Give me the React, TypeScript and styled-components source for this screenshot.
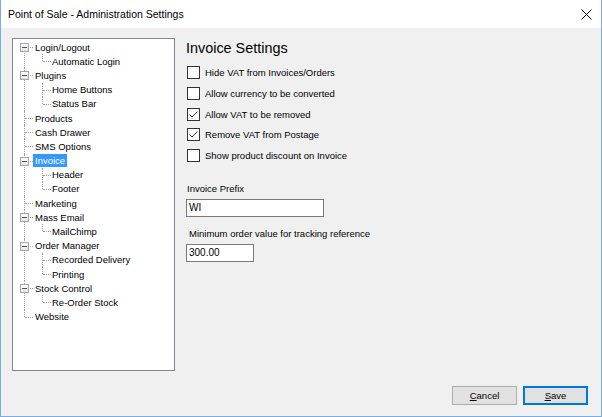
import React from 'react';
import styled, { createGlobalStyle } from 'styled-components';

const GlobalStyle = createGlobalStyle`
  html, body {
    margin: 0;
    padding: 0;
    background: #f0f0f0;
  }
  * {
    box-sizing: border-box;
  }
`;

const Window = styled.div`
  width: 602px;
  height: 417px;
  display: flex;
  flex-direction: column;
  background: #f0f0f0;
  border: 1px solid #75aee8;
  border-top: none;
  font-family: "Liberation Sans", Arial, sans-serif;
  font-size: 9.5px;
  color: #000;
  overflow: hidden;
`;

const TitleBar = styled.div`
  height: 28px;
  flex: none;
  display: flex;
  align-items: center;
  justify-content: space-between;
  background: #fff;
  padding: 0 9px 0 7px;
  font-size: 10.5px;
`;

const Body = styled.div`
  flex: 1;
  display: flex;
  flex-direction: column;
  padding: 10px 13px 0 11px;
`;

const Main = styled.div`
  display: flex;
  gap: 11px;
  height: 333px;
`;

const TreePanel = styled.div`
  width: 163px;
  height: 100%;
  flex: none;
  background: #fff;
  border: 1px solid #828790;
  padding-top: 1px;
`;

const TreeList = styled.ul`
  list-style: none;
  margin: 0;
  padding: 0;
`;

const dots = '1px dotted #a0a0a0';

const TreeItem = styled.li<{ $level: number; $first?: boolean; $last?: boolean }>`
  position: relative;

  &::before {
    content: '';
    position: absolute;
    left: ${p => (p.$level === 0 ? 11 : 29)}px;
    top: ${p => (p.$first && p.$level === 0 ? 7 : 0)}px;
    ${p => (p.$last ? 'height: 7px;' : 'bottom: 0;')}
    border-left: ${dots};
  }
`;

const Row = styled.div<{ $level: number }>`
  position: relative;
  height: 14.2px;
  display: flex;
  align-items: center;
  padding-left: ${p => (p.$level === 0 ? 20 : 37)}px;

  &::after {
    content: '';
    position: absolute;
    left: ${p => (p.$level === 0 ? 12 : 30)}px;
    width: 8px;
    top: 7px;
    border-top: ${dots};
  }
`;

const Expander = styled.span`
  position: absolute;
  left: 7px;
  top: 3px;
  width: 9px;
  height: 9px;
  background: linear-gradient(#ffffff, #e6e6e6);
  border: 1px solid #a5a5a5;
  z-index: 1;

  &::after {
    content: '';
    position: absolute;
    left: 1px;
    top: 3px;
    width: 5px;
    height: 1px;
    background: #505050;
  }
`;

const NodeLabel = styled.span<{ $selected?: boolean }>`
  position: relative;
  z-index: 1;
  padding: 0 2px;
  line-height: 13px;
  white-space: nowrap;
  background: ${p => (p.$selected ? '#3399ff' : 'transparent')};
  color: ${p => (p.$selected ? '#fff' : '#000')};
`;

const Settings = styled.div`
  flex: 1;
  display: flex;
  flex-direction: column;
  align-items: flex-start;
`;

const Heading = styled.h1`
  margin: 1px 0 0;
  font-size: 14.4px;
  font-weight: normal;
  line-height: 18px;
`;

const CheckList = styled.div`
  margin-top: 5.5px;
  display: flex;
  flex-direction: column;
`;

const CheckRow = styled.label`
  height: 20.7px;
  display: flex;
  align-items: center;
  gap: 5px;
  padding-left: 1px;
  white-space: nowrap;
`;

const Box = styled.span`
  width: 13px;
  height: 13px;
  flex: none;
  background: #fff;
  border: 1px solid #333;
  display: flex;
  align-items: center;
  justify-content: center;
`;

const FieldLabel = styled.div<{ $indent?: number; $top: number }>`
  margin-top: ${p => p.$top}px;
  padding-left: ${p => p.$indent ?? 1}px;
  line-height: 12px;
  white-space: nowrap;
`;

const TextInput = styled.div<{ $width: number }>`
  margin-top: 4px;
  width: ${p => p.$width}px;
  height: 18px;
  padding: 0 2px;
  display: flex;
  align-items: center;
  background: #fff;
  border: 1px solid #7a7a7a;
  font-size: 10px;
`;

const Footer = styled.div`
  margin-top: 15px;
  display: flex;
  justify-content: flex-end;
  gap: 6px;
`;

const Button = styled.button<{ $default?: boolean }>`
  width: 65px;
  height: 19px;
  padding: 0;
  font-family: inherit;
  font-size: 9.5px;
  color: #000;
  background: #e1e1e1;
  border: ${p => (p.$default ? '2px solid #0078d7' : '1px solid #adadad')};

  u {
    text-decoration: underline;
  }
`;

interface Node {
  label: string;
  children?: string[];
  selected?: boolean;
}

const tree: Node[] = [
  { label: 'Login/Logout', children: ['Automatic Login'] },
  { label: 'Plugins', children: ['Home Buttons', 'Status Bar'] },
  { label: 'Products' },
  { label: 'Cash Drawer' },
  { label: 'SMS Options' },
  { label: 'Invoice', children: ['Header', 'Footer'], selected: true },
  { label: 'Marketing' },
  { label: 'Mass Email', children: ['MailChimp'] },
  { label: 'Order Manager', children: ['Recorded Delivery', 'Printing'] },
  { label: 'Stock Control', children: ['Re-Order Stock'] },
  { label: 'Website' },
];

const options = [
  { label: 'Hide VAT from Invoices/Orders', checked: false },
  { label: 'Allow currency to be converted', checked: false },
  { label: 'Allow VAT to be removed', checked: true },
  { label: 'Remove VAT from Postage', checked: true },
  { label: 'Show product discount on Invoice', checked: false },
];

const Check = () => (
  <svg width="11" height="11" viewBox="0 0 11 11">
    <polyline points="1.5,5.5 4,8 9.5,2.5" fill="none" stroke="#333" strokeWidth="1" />
  </svg>
);

const CloseIcon = () => (
  <svg width="11" height="11" viewBox="0 0 11 11">
    <path d="M0.5 0.5 L10.5 10.5 M10.5 0.5 L0.5 10.5" stroke="#000" strokeWidth="1" />
  </svg>
);

const App = () => {
  return (
    <Window>
      <GlobalStyle />
      <TitleBar>
        <span>Point of Sale - Administration Settings</span>
        <CloseIcon />
      </TitleBar>
      <Body>
        <Main>
          <TreePanel>
            <TreeList>
              {tree.map((node, i) => (
                <TreeItem key={node.label} $level={0} $first={i === 0} $last={i === tree.length - 1}>
                  <Row $level={0}>
                    {node.children && <Expander />}
                    <NodeLabel $selected={node.selected}>{node.label}</NodeLabel>
                  </Row>
                  {node.children && (
                    <TreeList>
                      {node.children.map((child, j) => (
                        <TreeItem key={child} $level={1} $last={j === node.children!.length - 1}>
                          <Row $level={1}>
                            <NodeLabel>{child}</NodeLabel>
                          </Row>
                        </TreeItem>
                      ))}
                    </TreeList>
                  )}
                </TreeItem>
              ))}
            </TreeList>
          </TreePanel>

          <Settings>
            <Heading>Invoice Settings</Heading>
            <CheckList>
              {options.map(o => (
                <CheckRow key={o.label}>
                  <Box>{o.checked && <Check />}</Box>
                  {o.label}
                </CheckRow>
              ))}
            </CheckList>
            <FieldLabel $top={17}>Invoice Prefix</FieldLabel>
            <TextInput $width={138}>WI</TextInput>
            <FieldLabel $top={11} $indent={3}>Minimum order value for tracking reference</FieldLabel>
            <TextInput $width={68}>300.00</TextInput>
          </Settings>
        </Main>
        <Footer>
          <Button><u>C</u>ancel</Button>
          <Button $default><u>S</u>ave</Button>
        </Footer>
      </Body>
    </Window>
  );
};

export default App;
